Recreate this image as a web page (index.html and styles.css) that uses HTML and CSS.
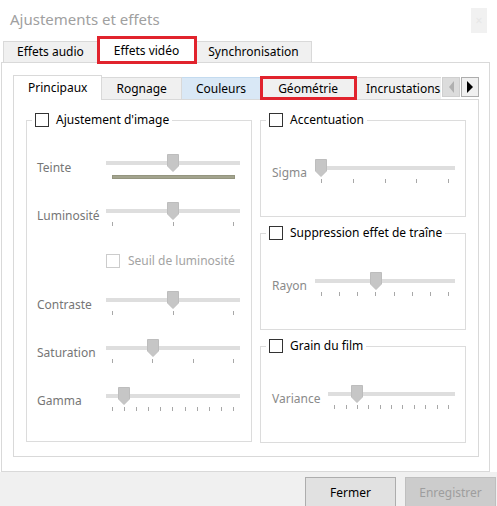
FILE: index.html
```html
<!DOCTYPE html>
<html lang="fr">
<head>
    <meta charset="UTF-8">
    <title>Ajustements et effets</title>
    <link rel="stylesheet" href="styles.css">
</head>
<body>
<div class="dialog">
    <div class="titlebar">
        <span class="title">Ajustements et effets</span>
        <span class="close">×</span>
    </div>

    <div class="main-tabs">
        <div class="tab">Effets audio</div>
        <div class="tab active marked">Effets vidéo</div>
        <div class="tab">Synchronisation</div>
    </div>

    <div class="main-pane">
        <div class="sub-tabs">
            <div class="tab-strip">
                <div class="tab active">Principaux</div>
                <div class="tab">Rognage</div>
                <div class="tab hover">Couleurs</div>
                <div class="tab marked wide">Géométrie</div>
                <div class="tab narrow">Incrustations</div>
            </div>
            <div class="scroll-btn disabled"><span class="tri left"></span></div>
            <div class="scroll-btn"><span class="tri right"></span></div>
        </div>

        <div class="sub-pane">
            <fieldset class="group big">
                <legend><input type="checkbox"><span>Ajustement d'image</span></legend>
                <div class="rows">
                    <div class="row">
                        <span class="label">Teinte</span>
                        <div class="slider">
                            <div class="track"></div>
                            <div class="hue-bar"></div>
                            <svg class="thumb" style="left: calc((100% - 12px) * 0.5)" width="12" height="18" viewBox="0 0 12 18"><path d="M0.5 0.5H11.5V12L6 17.5L0.5 12Z"/></svg>
                        </div>
                    </div>
                    <div class="row">
                        <span class="label">Luminosité</span>
                        <div class="slider">
                            <div class="track"></div>
                            <div class="ticks"><i></i><i></i><i></i></div>
                            <svg class="thumb" style="left: calc((100% - 12px) * 0.5)" width="12" height="18" viewBox="0 0 12 18"><path d="M0.5 0.5H11.5V12L6 17.5L0.5 12Z"/></svg>
                        </div>
                    </div>
                    <div class="row check-row">
                        <input type="checkbox" disabled><span class="muted">Seuil de luminosité</span>
                    </div>
                    <div class="row">
                        <span class="label">Contraste</span>
                        <div class="slider">
                            <div class="track"></div>
                            <div class="ticks"><i></i><i></i><i></i></div>
                            <svg class="thumb" style="left: calc((100% - 12px) * 0.5)" width="12" height="18" viewBox="0 0 12 18"><path d="M0.5 0.5H11.5V12L6 17.5L0.5 12Z"/></svg>
                        </div>
                    </div>
                    <div class="row">
                        <span class="label">Saturation</span>
                        <div class="slider">
                            <div class="track"></div>
                            <div class="ticks"><i></i><i></i><i></i><i></i></div>
                            <svg class="thumb" style="left: calc((100% - 12px) * 0.3333)" width="12" height="18" viewBox="0 0 12 18"><path d="M0.5 0.5H11.5V12L6 17.5L0.5 12Z"/></svg>
                        </div>
                    </div>
                    <div class="row">
                        <span class="label">Gamma</span>
                        <div class="slider">
                            <div class="track"></div>
                            <div class="ticks"><i></i><i></i><i></i><i></i><i></i><i></i><i></i><i></i><i></i><i></i><i></i></div>
                            <svg class="thumb" style="left: calc((100% - 12px) * 0.1)" width="12" height="18" viewBox="0 0 12 18"><path d="M0.5 0.5H11.5V12L6 17.5L0.5 12Z"/></svg>
                        </div>
                    </div>
                </div>
            </fieldset>

            <div class="right-col">
                <fieldset class="group small">
                    <legend><input type="checkbox"><span>Accentuation</span></legend>
                    <div class="rows">
                        <div class="row compact">
                            <span class="label">Sigma</span>
                            <div class="slider">
                                <div class="track"></div>
                                <div class="ticks"><i></i><i></i><i></i><i></i><i></i></div>
                                <svg class="thumb" style="left: 0" width="12" height="18" viewBox="0 0 12 18"><path d="M0.5 0.5H11.5V12L6 17.5L0.5 12Z"/></svg>
                            </div>
                        </div>
                    </div>
                </fieldset>
                <fieldset class="group small">
                    <legend><input type="checkbox"><span>Suppression effet de traîne</span></legend>
                    <div class="rows">
                        <div class="row compact">
                            <span class="label">Rayon</span>
                            <div class="slider">
                                <div class="track"></div>
                                <div class="ticks"><i></i><i></i><i></i><i></i><i></i><i></i><i></i><i></i></div>
                                <svg class="thumb" style="left: calc((100% - 12px) * 0.4286)" width="12" height="18" viewBox="0 0 12 18"><path d="M0.5 0.5H11.5V12L6 17.5L0.5 12Z"/></svg>
                            </div>
                        </div>
                    </div>
                </fieldset>
                <fieldset class="group small">
                    <legend><input type="checkbox"><span>Grain du film</span></legend>
                    <div class="rows">
                        <div class="row compact">
                            <span class="label">Variance</span>
                            <div class="slider">
                                <div class="track"></div>
                                <div class="ticks"><i></i><i></i><i></i><i></i><i></i><i></i><i></i><i></i><i></i><i></i><i></i></div>
                                <svg class="thumb" style="left: calc((100% - 12px) * 0.2)" width="12" height="18" viewBox="0 0 12 18"><path d="M0.5 0.5H11.5V12L6 17.5L0.5 12Z"/></svg>
                            </div>
                        </div>
                    </div>
                </fieldset>
            </div>
        </div>
    </div>

    <div class="footer">
        <button>Fermer</button>
        <button disabled>Enregistrer</button>
    </div>
</div>
</body>
</html>
```

FILE: styles.css
```css
* {
    box-sizing: border-box;
}
body {
    margin: 0;
    font-family: "Noto Sans", sans-serif;
    font-size: 12px;
    color: #000;
    background-color: #fff;
    overflow: hidden;
}
.dialog {
    width: 497px;
    height: 506px;
    display: flex;
    flex-direction: column;
}

/* title bar */
.titlebar {
    height: 36px;
    flex: none;
    display: flex;
    justify-content: space-between;
    align-items: flex-start;
    padding: 0 10px 0 10px;
}
.title {
    font-size: 15px;
    line-height: 20px;
    margin-top: 9px;
    color: #a0a0a0;
}
.close {
    width: 16px;
    height: 25px;
    margin-top: 8px;
    background-color: #f1f1f1;
    color: #e6e6e6;
    font-size: 12px;
    line-height: 25px;
    text-align: center;
}

/* tabs */
.main-tabs {
    height: 26px;
    flex: none;
    display: flex;
    align-items: flex-end;
    padding-left: 3px;
}
.tab {
    height: 21px;
    line-height: 20px;
    padding: 0 13px;
    background-color: #f0f0f0;
    border: 1px solid #d9d9d9;
    border-bottom: none;
    white-space: nowrap;
}
.tab + .tab {
    border-left: none;
}
.tab.active {
    height: 26px;
    line-height: 25px;
    margin-bottom: -1px;
    padding: 0 16px;
    background-color: #fff;
    position: relative;
    z-index: 1;
}
.main-tabs .tab:last-child {
    padding: 0 12px;
}
.tab.marked {
    outline: 3px solid #e1232d;
    outline-offset: -2px;
    position: relative;
    z-index: 2;
}
.tab.hover {
    background-color: #d9e8f6;
    border-color: #c4dbef;
}

/* main pane */
.main-pane {
    flex: none;
    height: 410px;
    margin: 0 7px 0 1px;
    border: 1px solid #d9d9d9;
    background-color: #fff;
    padding: 11px 10px 0 11px;
    display: flex;
    flex-direction: column;
}
.sub-tabs {
    height: 25px;
    flex: none;
    display: flex;
    align-items: flex-end;
}
.tab-strip {
    display: flex;
    align-items: flex-end;
    width: 430px;
    overflow: hidden;
    height: 26px;
    margin-bottom: -1px;
    padding-bottom: 1px;
}
.sub-tabs .tab {
    height: 22px;
    line-height: 21px;
    padding: 0 14px;
}
.sub-tabs .tab.active {
    height: 25px;
    line-height: 23px;
    padding: 0 14px;
    margin-bottom: -1px;
}
.sub-tabs .tab.wide {
    padding: 0 17px;
}
.sub-tabs .tab.narrow {
    padding: 0 10px;
}
.scroll-btn {
    width: 18px;
    height: 20px;
    margin: 0 0 2px 1px;
    border: 1px solid #adadad;
    background-color: #f0f0f0;
    display: flex;
    align-items: center;
    justify-content: center;
}
.scroll-btn.disabled {
    border-color: #cfcfcf;
    background-color: #dcdcdc;
}
.tri {
    width: 0;
    height: 0;
    border-top: 6px solid transparent;
    border-bottom: 6px solid transparent;
}
.tri.left {
    border-right: 5px solid #b0b0b0;
}
.tri.right {
    border-left: 6px solid #000;
}

.sub-pane {
    height: 358px;
    flex: none;
    border: 1px solid #d9d9d9;
    padding: 12px 12px 0 12px;
    display: flex;
    gap: 8px;
    align-items: flex-start;
}

/* group boxes */
.group {
    margin: 0;
    padding: 0;
    border: 1px solid #dcdcdc;
    min-width: 0;
}
.group.big {
    width: 226px;
    height: 330px;
}
.group.small {
    height: 105px;
}
.group legend {
    display: flex;
    align-items: center;
    gap: 7px;
    height: 16px;
    line-height: 16px;
    margin-left: 5px;
    padding: 0 3px;
}
input[type="checkbox"] {
    appearance: none;
    width: 14px;
    height: 14px;
    margin: 0;
    border: 1px solid #333;
    background-color: #fff;
    flex: none;
}
input[type="checkbox"]:disabled {
    border-color: #cccccc;
}
.right-col {
    width: 206px;
    display: flex;
    flex-direction: column;
    gap: 8px;
}
.right-col .group {
    width: 206px;
}

/* rows of sliders */
.rows {
    display: flex;
    flex-direction: column;
    gap: 20px;
    padding-top: 26px;
}
.right-col .rows {
    padding-top: 31px;
}
.row {
    display: flex;
    align-items: center;
    height: 28px;
    padding: 0 11px 0 10px;
}
.row.compact {
    padding: 0 10px 0 11px;
    gap: 8px;
}
.label {
    width: 69px;
    flex: none;
    color: #767676;
    line-height: 16px;
}
.row.compact .label {
    width: auto;
    color: #8a8a8a;
}
.check-row {
    height: 21px;
    padding-left: 79px;
    gap: 8px;
}
.muted {
    color: #a3a3a3;
}
.slider {
    flex: 1;
    height: 28px;
    position: relative;
    align-self: flex-start;
}
.track {
    margin-top: 7px;
    height: 4px;
    background-color: #dedede;
}
.ticks {
    display: flex;
    justify-content: space-between;
    margin: 9px 6px 0 6px;
    height: 4px;
}
.ticks i {
    width: 1px;
    height: 4px;
    background-color: #a8a8a8;
}
.hue-bar {
    margin: 10px 5px 0 6px;
    height: 4px;
    background-color: #a3a48e;
    border: 1px solid #94957f;
}
.thumb {
    position: absolute;
    top: 0;
    fill: #c6c6c6;
    stroke: #bdbdbd;
    stroke-width: 1;
}

/* footer */
.footer {
    flex: 1;
    background-color: #f0f0f0;
    display: flex;
    justify-content: flex-end;
    align-items: flex-start;
    gap: 9px;
    padding: 5px 1px 0 0;
}
.footer button {
    width: 91px;
    height: 30px;
    font-family: "Noto Sans", sans-serif;
    font-size: 12px;
    background-color: #e1e1e1;
    border: 1px solid #adadad;
    color: #000;
    padding: 0;
}
.footer button:disabled {
    background-color: #cccccc;
    border-color: #bfbfbf;
    color: #9e9e9e;
}
```
